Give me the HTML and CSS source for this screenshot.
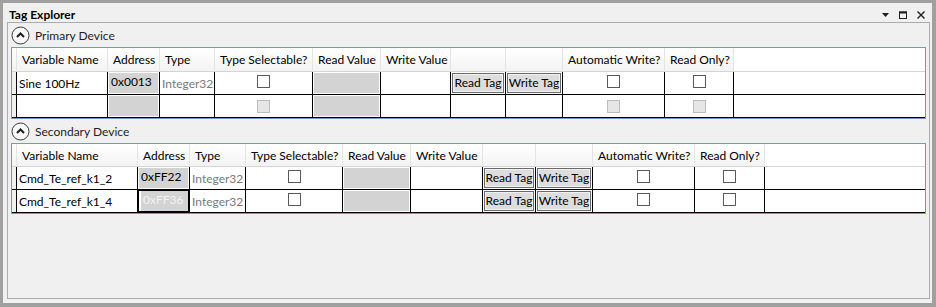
FILE: index.html
```html
<!DOCTYPE html>
<html lang="en">
<head>
  <meta charset="UTF-8">
  <title>Tag Explorer</title>
  <link rel="stylesheet" href="styles.css">
</head>
<body>

  <div class="window">
    <div class="titlebar">
      <span class="title">Tag Explorer</span>
      <div class="win-controls">
        <svg width="7" height="4" viewBox="0 0 7 4"><path d="M0 0H7L3.5 4Z" fill="#1e1e1e"/></svg>
        <svg width="8" height="8" viewBox="0 0 8 8"><rect x="0.5" y="1" width="7" height="6.5" fill="none" stroke="#1e1e1e" stroke-width="1"/><rect x="0" y="0.5" width="8" height="2" fill="#1e1e1e"/></svg>
        <svg width="8" height="8" viewBox="0 0 8 8"><path d="M0.5 0.5L7.5 7.5M7.5 0.5L0.5 7.5" stroke="#1e1e1e" stroke-width="1.4"/></svg>
      </div>
    </div>

    <div class="panel">
      <div class="expander">
        <svg width="19" height="19" viewBox="0 0 19 19"><circle cx="9.5" cy="9.5" r="8.5" fill="#f7f7f7" stroke="#3a3a3a"/><path d="M6 11L9.5 7.5L13 11" fill="none" stroke="#1e1e1e" stroke-width="2"/></svg>
        <span>Primary Device</span>
      </div>

      <div class="grid grid-primary">
        <div class="rh hdr"></div>
        <div class="hc">Variable Name</div>
        <div class="hc">Address</div>
        <div class="hc">Type</div>
        <div class="hc">Type Selectable?</div>
        <div class="hc">Read Value</div>
        <div class="hc">Write Value</div>
        <div class="hc"></div>
        <div class="hc"></div>
        <div class="hc">Automatic Write?</div>
        <div class="hc">Read Only?</div>
        <div class="hc rest"></div>

        <div class="rh"></div>
        <div class="c">Sine 100Hz</div>
        <div class="c"><div class="ro addr">0x0013</div></div>
        <div class="c type">Integer32</div>
        <div class="c center"><span class="chk"></span></div>
        <div class="c"><div class="ro"></div></div>
        <div class="c"></div>
        <div class="c"><button class="btn">Read Tag</button></div>
        <div class="c"><button class="btn">Write Tag</button></div>
        <div class="c center"><span class="chk"></span></div>
        <div class="c center"><span class="chk"></span></div>
        <div class="c rest"></div>

        <div class="rh"></div>
        <div class="c"></div>
        <div class="c"><div class="ro"></div></div>
        <div class="c"></div>
        <div class="c center"><span class="chk off"></span></div>
        <div class="c"><div class="ro"></div></div>
        <div class="c"></div>
        <div class="c"></div>
        <div class="c"></div>
        <div class="c center"><span class="chk off"></span></div>
        <div class="c center"><span class="chk off"></span></div>
        <div class="c rest"></div>
      </div>

      <div class="expander">
        <svg width="19" height="19" viewBox="0 0 19 19"><circle cx="9.5" cy="9.5" r="8.5" fill="#f7f7f7" stroke="#3a3a3a"/><path d="M6 11L9.5 7.5L13 11" fill="none" stroke="#1e1e1e" stroke-width="2"/></svg>
        <span>Secondary Device</span>
      </div>

      <div class="grid grid-secondary">
        <div class="rh hdr"></div>
        <div class="hc">Variable Name</div>
        <div class="hc">Address</div>
        <div class="hc">Type</div>
        <div class="hc">Type Selectable?</div>
        <div class="hc">Read Value</div>
        <div class="hc">Write Value</div>
        <div class="hc"></div>
        <div class="hc"></div>
        <div class="hc">Automatic Write?</div>
        <div class="hc">Read Only?</div>
        <div class="hc rest"></div>

        <div class="rh"></div>
        <div class="c">Cmd_Te_ref_k1_2</div>
        <div class="c"><div class="ro addr">0xFF22</div></div>
        <div class="c type">Integer32</div>
        <div class="c center"><span class="chk"></span></div>
        <div class="c"><div class="ro"></div></div>
        <div class="c"></div>
        <div class="c"><button class="btn">Read Tag</button></div>
        <div class="c"><button class="btn">Write Tag</button></div>
        <div class="c center"><span class="chk"></span></div>
        <div class="c center"><span class="chk"></span></div>
        <div class="c rest"></div>

        <div class="rh"></div>
        <div class="c">Cmd_Te_ref_k1_4</div>
        <div class="c selected"><div class="ro addr">0xFF36</div></div>
        <div class="c type">Integer32</div>
        <div class="c center"><span class="chk"></span></div>
        <div class="c"><div class="ro"></div></div>
        <div class="c"></div>
        <div class="c"><button class="btn">Read Tag</button></div>
        <div class="c"><button class="btn">Write Tag</button></div>
        <div class="c center"><span class="chk"></span></div>
        <div class="c center"><span class="chk"></span></div>
        <div class="c rest"></div>
      </div>
    </div>
  </div>

</body>
</html>
```

FILE: styles.css
```css
body {
  margin: 0;
  font-family: Lato, "Liberation Sans", sans-serif;
  font-size: 12px;
  color: #1a1a1a;
  background: #f0f0f0;
}
.window {
  width: 936px;
  height: 307px;
  box-sizing: border-box;
  border: solid #a0a0a0;
  border-width: 3px 4px 4px 3px;
  background: #f0f0f0;
  display: flex;
  flex-direction: column;
}
.titlebar {
  height: 19px;
  box-sizing: border-box;
  padding: 4px 7px 0 6px;
  display: flex;
  align-items: center;
  justify-content: space-between;
}
.title {
  font-weight: bold;
  color: #000;
}
.win-controls {
  display: flex;
  align-items: center;
  gap: 10px;
}
.panel {
  flex: 1;
  margin: 0 2px 4px 4px;
  border: 1px solid #acacac;
  padding: 0 3px;
}
.expander {
  height: 24px;
  display: flex;
  align-items: center;
  gap: 5px;
  color: #1e1e1e;
}
.expander span {
  padding-top: 1px;
}
.grid {
  display: grid;
  border: 1px solid #7a96b8;
  background: #fff;
  grid-auto-rows: 23px;
}
.grid-primary {
  grid-template-columns: 5px 91px 52px 55px 98px 68px 70px 55px 57px 102px 69px 1fr;
  grid-template-rows: 24px;
}
.grid-secondary {
  grid-template-columns: 5px 121px 52px 56px 97px 68px 72px 53px 57px 102px 70px 1fr;
  grid-template-rows: 23px;
}
.hc, .rh.hdr {
  background: linear-gradient(#ffffff, #f3f3f3);
  border-right: 1px solid #e4e4e4;
  border-bottom: 1px solid #d5d5d5;
  padding-left: 5px;
  display: flex;
  align-items: center;
  white-space: nowrap;
  overflow: hidden;
  color: #000;
}
.rh.hdr {
  padding: 0;
}
.hc.rest {
  background: #fff;
  border-right: none;
}
.rh {
  background: #f0f0f0;
  border-right: 1px solid #000;
  border-bottom: 1px solid #000;
}
.c {
  border-right: 1px solid #000;
  border-bottom: 1px solid #000;
  display: flex;
  align-items: center;
  padding-left: 2px;
  white-space: nowrap;
  overflow: hidden;
  color: #000;
}
.c.rest {
  border-right: none;
}
.c.center {
  justify-content: center;
  padding-left: 0;
}
.type {
  color: #7a7a7a;
}
.ro {
  align-self: stretch;
  flex: 1;
  margin: 1px 1px 1px -1px;
  background: #d3d3d3;
  padding: 0 2px 3px;
  display: flex;
  align-items: center;
}
.c.selected {
  border: 2px solid #000;
  margin: -1px 0 0 -1px;
}
.c.selected .ro {
  margin: 0;
  color: #f2f2f2;
}
.chk {
  width: 11px;
  height: 11px;
  border: 1px solid #5a5a5a;
  background: #fff;
  margin-top: -4px;
}
.chk.off {
  border-color: #bcbcbc;
  background: #e6e6e6;
  margin-top: 0;
}
.btn {
  font: inherit;
  color: #000;
  background: #dddddd;
  border: 1px solid #6a6a6a;
  box-shadow: inset 0 0 0 1px #f2f2f2;
  height: 20px;
  width: 100%;
  margin: 0 1px 1px -1px;
  padding: 0;
  white-space: nowrap;
}
```
